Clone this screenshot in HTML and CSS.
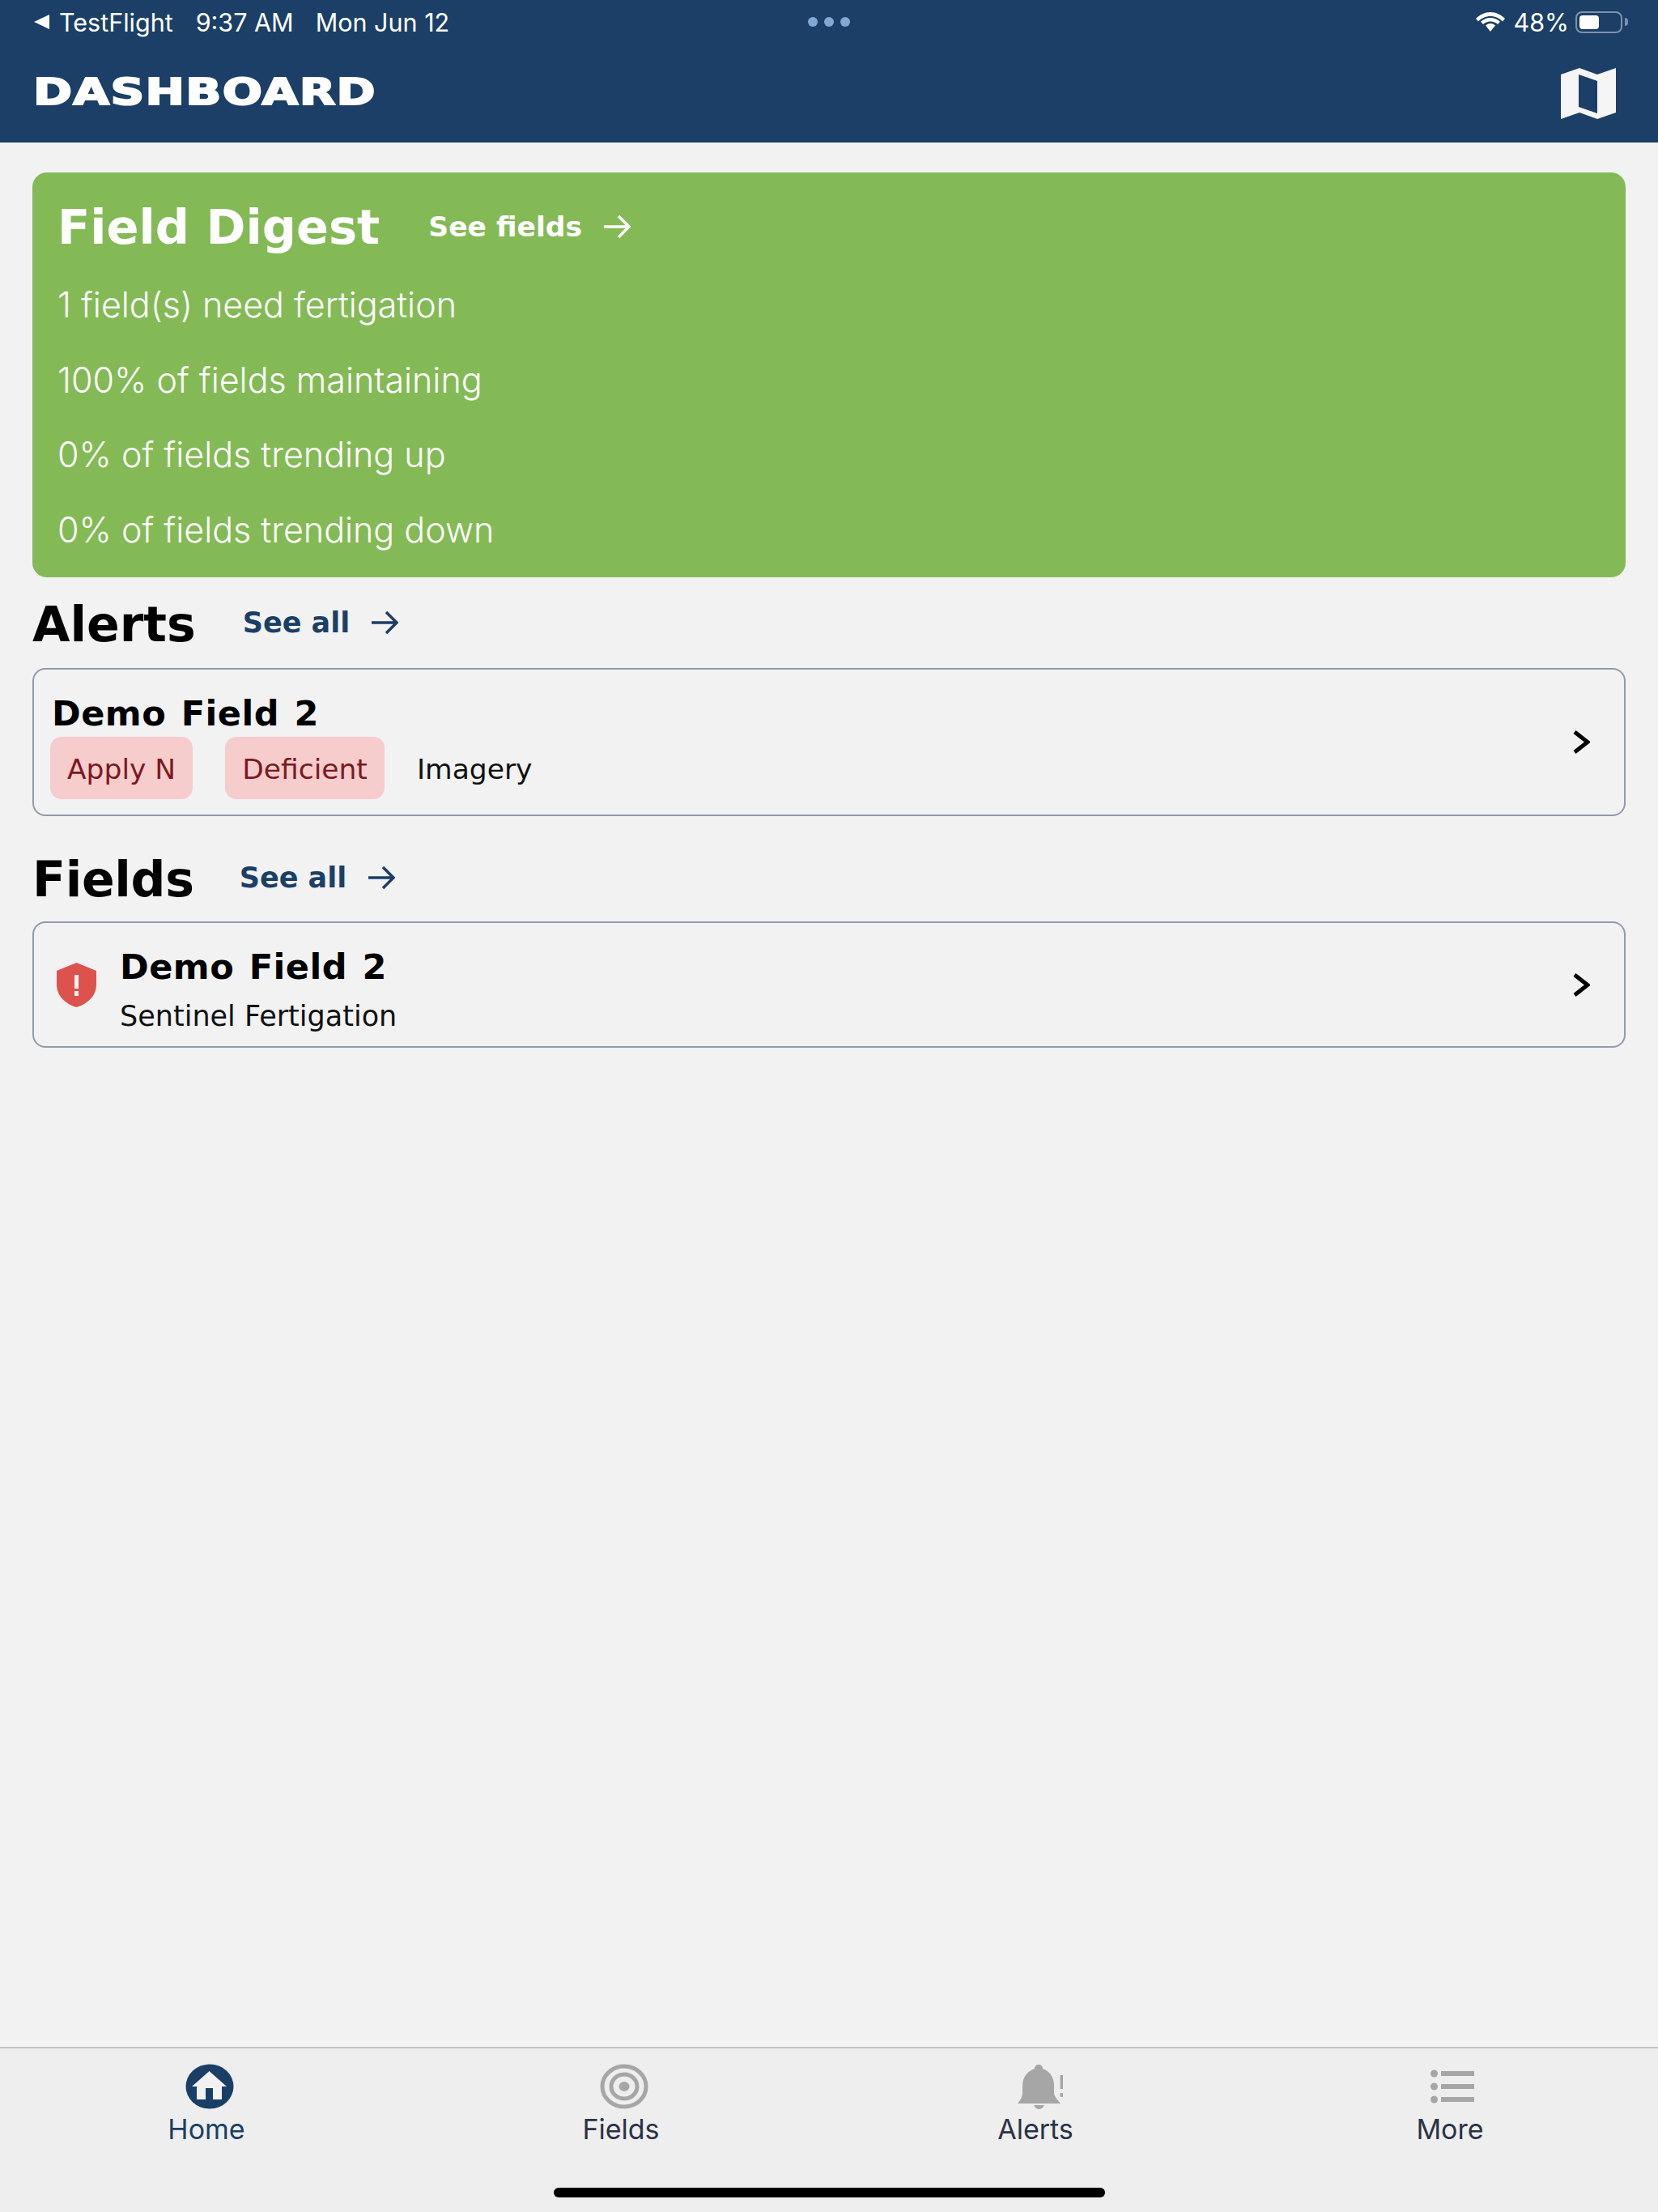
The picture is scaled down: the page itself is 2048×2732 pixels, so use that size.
FILE: index.html
```html
<!DOCTYPE html>
<html lang="en">
<head>
    <meta charset="UTF-8">
    <meta name="viewport" content="width=device-width, initial-scale=1.0">
    <title>Dashboard</title>
    <link rel="stylesheet" href="styles.css">
</head>
<body>
    <div class="page">
        <header class="app-header">
            <div class="status-bar">
                <div class="status-left">
                    <svg class="back-arrow" viewBox="0 0 19 18"><path d="M19 0V18L0 9Z"/></svg>
                    <span class="status-app">TestFlight</span>
                    <span class="status-time">9:37 AM</span>
                    <span>Mon Jun 12</span>
                </div>
                <div class="status-dots"><i></i><i></i><i></i></div>
                <div class="status-right">
                    <svg class="wifi" viewBox="0 0 36 24"><path d="M18 5C24 5 29 7.500 33 11.500L36 8C31 3 25 0 18 0S5 3 0 8L3 11.500C7 7.500 12 5 18 5Z"/><path d="M18 11.500C21.500 11.500 24.500 13 27 15L30 11.800C26.500 8.800 22.500 7 18 7S9.500 8.800 6 11.800L9 15C11.500 13 14.500 11.500 18 11.500Z"/><path d="M18 14C15.500 14 13.500 15 12 16.500L18 24L24 16.500C22.500 15 20.500 14 18 14Z"/></svg>
                    <span class="battery-pct">48%</span>
                    <div class="battery"><div class="battery-fill"></div></div>
                    <div class="battery-nub"></div>
                </div>
            </div>
            <div class="title-row">
                <h1 class="page-title">DASHBOARD</h1>
                <svg class="map-icon" viewBox="0 0 68 63"><path fill-rule="evenodd" d="M0 8L23 0L45 8L68 0V55L45 63L23 55L0 63ZM22 8V48L45 56V16Z"/></svg>
            </div>
        </header>

        <main class="content">
            <section class="digest">
                <div class="digest-head">
                    <h2 class="digest-title">Field Digest</h2>
                    <a class="see-link see-link-light">See fields
                        <svg class="arrow" viewBox="0 0 34 30"><path d="M1 15H32M19 2L32 15L19 28"/></svg>
                    </a>
                </div>
                <p class="digest-line">1 field(s) need fertigation</p>
                <p class="digest-line">100% of fields maintaining</p>
                <p class="digest-line">0% of fields trending up</p>
                <p class="digest-line">0% of fields trending down</p>
            </section>

            <div class="section-head">
                <h2 class="section-title">Alerts</h2>
                <a class="see-link">See all
                    <svg class="arrow" viewBox="0 0 34 30"><path d="M1 15H32M19 2L32 15L19 28"/></svg>
                </a>
            </div>
            <div class="card alert-card">
                <div class="card-body">
                    <div class="card-name">Demo Field 2</div>
                    <div class="chips">
                        <span class="chip chip-red">Apply N</span>
                        <span class="chip chip-red">Deficient</span>
                        <span class="chip">Imagery</span>
                    </div>
                </div>
                <svg class="chevron" viewBox="0 0 21 29"><path d="M2 2L18 14.500L2 27"/></svg>
            </div>

            <div class="section-head section-head-fields">
                <h2 class="section-title">Fields</h2>
                <a class="see-link">See all
                    <svg class="arrow" viewBox="0 0 34 30"><path d="M1 15H32M19 2L32 15L19 28"/></svg>
                </a>
            </div>
            <div class="card field-card">
                <svg class="shield" viewBox="0 0 49 55"><path fill-rule="evenodd" d="M24.500 0L49 10V27C49 41 38 51 24.500 55C11 51 0 41 0 27V10ZM22 15V32H27V15ZM22 35V41H27V35Z"/></svg>
                <div class="card-body">
                    <div class="card-name">Demo Field 2</div>
                    <div class="card-sub">Sentinel Fertigation</div>
                </div>
                <svg class="chevron" viewBox="0 0 21 29"><path d="M2 2L18 14.500L2 27"/></svg>
            </div>
        </main>

        <footer class="tabbar">
            <div class="tabs">
                <div class="tab tab-active">
                    <svg class="tab-icon" viewBox="0 0 60 56">
                        <ellipse cx="30" cy="28" rx="29.500" ry="27.500" fill="#1a3f66"/>
                        <path fill="#f2f2f2" fill-rule="evenodd" d="M29.500 9L51 28H45V44H14V28H8ZM25 30V44H34V30Z"/>
                    </svg>
                    <span class="tab-label">Home</span>
                </div>
                <div class="tab">
                    <svg class="tab-icon" viewBox="0 0 60 56">
                        <ellipse cx="30" cy="28" rx="27" ry="25" fill="none" stroke="#a6a6a6" stroke-width="5"/>
                        <ellipse cx="30" cy="28" rx="16" ry="15" fill="none" stroke="#a6a6a6" stroke-width="5"/>
                        <ellipse cx="30" cy="28" rx="6.500" ry="6" fill="#a6a6a6"/>
                    </svg>
                    <span class="tab-label">Fields</span>
                </div>
                <div class="tab">
                    <svg class="tab-icon" viewBox="0 0 60 56">
                        <path fill="#a6a6a6" d="M30 1C33 1 35 3 35 6C44 9 49 17 49 27V36C49 40 53 44 57 49H4C8 44 10 40 10 36V27C10 17 16 9 25 6C25 3 27 1 30 1ZM24 51H37C36 54 33 56 30.500 56S25 54 24 51Z"/>
                        <path fill="#a6a6a6" d="M56.500 14H60V31H56.500ZM56.500 36H60V41H56.500Z"/>
                    </svg>
                    <span class="tab-label">Alerts</span>
                </div>
                <div class="tab">
                    <svg class="tab-icon" viewBox="0 0 60 56">
                        <g fill="#a6a6a6">
                            <circle cx="6.500" cy="12" r="4.500"/><rect x="15" y="9" width="41" height="6"/>
                            <circle cx="6.500" cy="28" r="4.500"/><rect x="15" y="25" width="41" height="6"/>
                            <circle cx="6.500" cy="44" r="4.500"/><rect x="15" y="41" width="41" height="6"/>
                        </g>
                    </svg>
                    <span class="tab-label">More</span>
                </div>
            </div>
            <div class="home-indicator"></div>
        </footer>
    </div>
</body>
</html>
```

FILE: styles.css
```css
* {
    box-sizing: border-box;
}
body {
    margin: 0;
    padding: 0;
    background-color: #f2f2f2;
    font-family: "DejaVu Sans", sans-serif;
}
.page {
    display: flex;
    flex-direction: column;
    height: 2732px;
}

/* header */
.app-header {
    height: 176px;
    background: #1b3f66;
    color: #fff;
    padding: 0 42px 0 42px;
}
.status-bar {
    display: grid;
    grid-template-columns: 1fr auto 1fr;
    align-items: center;
    height: 54px;
    font-family: Inter, sans-serif;
    font-size: 30.5px;
}
.status-left {
    display: flex;
    align-items: center;
}
.back-arrow {
    width: 19px;
    height: 18px;
    fill: #fff;
    margin-right: 12px;
}
.status-app {
    margin-right: 28px;
}
.status-time {
    margin-right: 27px;
}
.status-dots {
    display: flex;
    gap: 8px;
}
.status-dots i {
    width: 12px;
    height: 12px;
    border-radius: 50%;
    background: #7fa9d4;
}
.status-right {
    display: flex;
    align-items: center;
    justify-content: flex-end;
    margin-right: -5px;
}
.wifi {
    width: 36px;
    height: 24px;
    fill: #fff;
    margin-right: 10px;
}
.battery-pct {
    margin-right: 8px;
}
.battery {
    width: 58px;
    height: 27px;
    border: 2px solid #7d93ab;
    border-radius: 8px;
    padding: 3px;
}
.battery-fill {
    width: 24px;
    height: 100%;
    background: #fff;
    border-radius: 4px;
}
.battery-nub {
    width: 4px;
    height: 10px;
    margin-left: 3px;
    background: #7d93ab;
    border-radius: 0 4px 4px 0;
}
.title-row {
    display: flex;
    justify-content: space-between;
    align-items: center;
    height: 116px;
    margin-top: 1px;
}
.page-title {
    margin: 0 0 0 -1px;
    font-size: 45px;
    line-height: 1;
    letter-spacing: 1px;
    transform: scaleX(1.287);
    transform-origin: left center;
    -webkit-text-stroke: 2px #fff;
}
.map-icon {
    width: 68px;
    height: 63px;
    fill: #f5f5f5;
    margin: 5px 10px 0 0;
}

/* main */
.content {
    flex: 1;
    padding: 37px 40px 0 40px;
}
.digest {
    height: 500px;
    background: #84ba56;
    color: #fff;
    border-radius: 18px;
    padding: 0 31px;
}
.digest-head {
    display: flex;
    align-items: center;
    height: 117px;
    padding-top: 17px;
}
.digest-title {
    margin: 0 60px 0 0;
    font-size: 59px;
    font-weight: bold;
}
.digest-line {
    margin: 0;
    height: 92.5px;
    line-height: 92.5px;
    font-family: Inter, sans-serif;
    font-weight: 350;
    font-size: 43px;
}
.section-head {
    display: flex;
    align-items: center;
    height: 112px;
}
.section-head-fields {
    height: 130px;
    padding-top: 22px;
}
.section-title {
    margin: 4px 58px 0 0;
    font-size: 60px;
    font-weight: bold;
    color: #000;
}
.section-head-fields .section-title {
    margin-right: 56px;
    letter-spacing: -0.3px;
}
.see-link {
    display: flex;
    align-items: center;
    font-size: 35px;
    font-weight: bold;
    color: #1b3f66;
}
.arrow {
    width: 34px;
    height: 30px;
    margin-left: 26px;
    fill: none;
    stroke: currentColor;
    stroke-width: 3.500;
}
.see-link-light {
    color: #fff;
    font-size: 34.5px;
}
.card {
    display: flex;
    align-items: center;
    border: 2px solid #929aab;
    border-radius: 16px;
    padding: 0 42px 0 22px;
}
.card-body {
    flex: 1;
}
.alert-card {
    height: 183px;
}
.alert-card .card-body {
    padding-top: 11px;
}
.field-card {
    height: 156px;
    padding-left: 28px;
}
.field-card .card-body {
    padding-top: 14px;
}
.card-name {
    font-size: 43px;
    line-height: 49px;
    font-weight: bold;
    letter-spacing: 0.5px;
    word-spacing: 3px;
    color: #000;
}
.card-sub {
    margin-top: 16px;
    font-size: 35px;
    line-height: 41px;
    color: #111;
}
.chips {
    display: flex;
    gap: 40px;
    margin-left: -2px;
    margin-top: 4px;
}
.chip {
    display: flex;
    align-items: center;
    height: 77px;
    padding-top: 3px;
    font-size: 34.5px;
    color: #111;
}
.chip-red {
    padding: 3px 21px 0 21px;
    background: #f6cccc;
    color: #7a1a1f;
    border-radius: 14px;
}
.chevron {
    width: 21px;
    height: 29px;
    fill: none;
    stroke: #000;
    stroke-width: 5;
}
.shield {
    width: 49px;
    height: 55px;
    margin-right: 29px;
    fill: #de524e;
}

/* tab bar */
.tabbar {
    height: 204px;
    background: #eeeeee;
    border-top: 2px solid #c4c4c4;
}
.tabs {
    display: grid;
    grid-template-columns: repeat(4, 1fr);
    padding-top: 19px;
}
.tab {
    display: flex;
    flex-direction: column;
    align-items: center;
}
.tab-icon {
    width: 60px;
    height: 56px;
    margin-left: 6px;
    overflow: visible;
}
.tab-label {
    margin: 6px 2px 0 0;
    font-family: Inter, sans-serif;
    font-size: 34px;
    line-height: 38px;
    color: #2b3245;
}
.tab-active .tab-label {
    color: #1a3f66;
}
.home-indicator {
    width: 681px;
    height: 12px;
    margin: 53px auto 0 auto;
    background: #000;
    border-radius: 6px;
}
```
